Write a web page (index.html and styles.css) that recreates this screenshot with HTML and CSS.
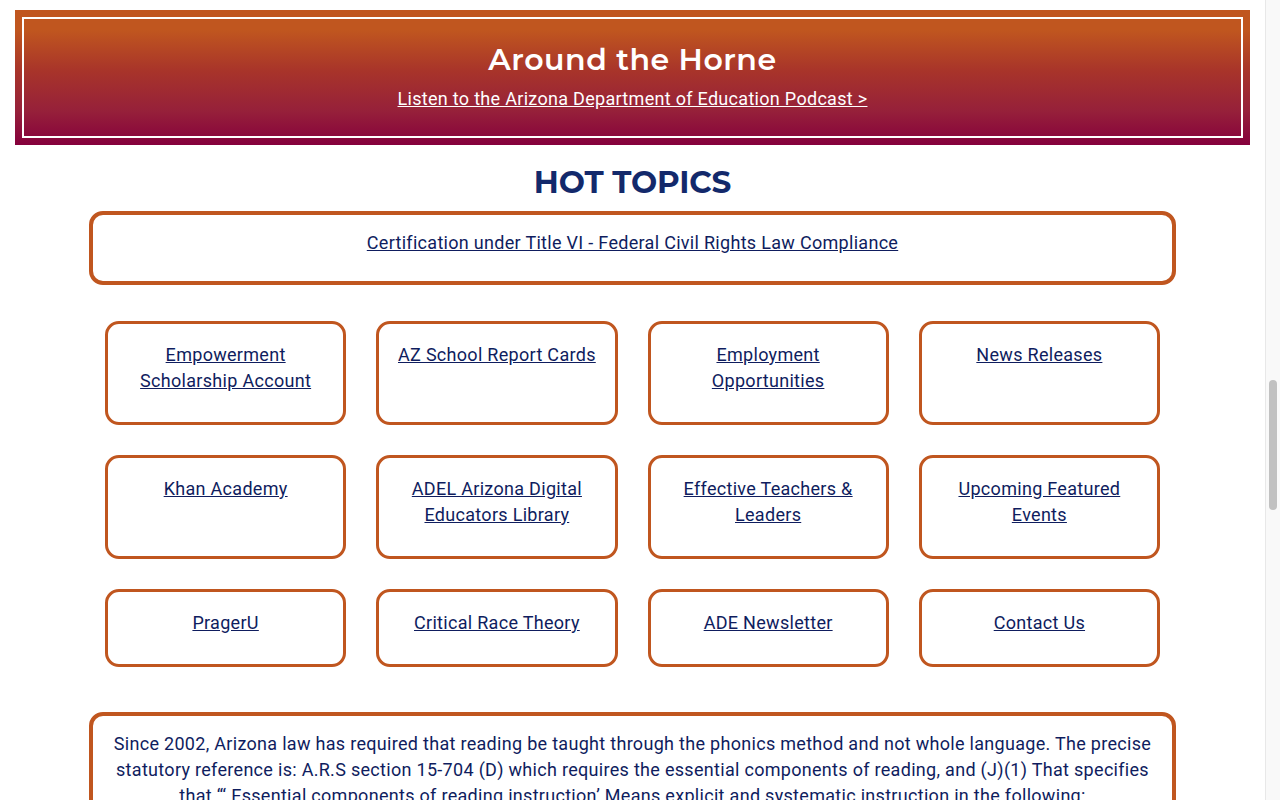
FILE: index.html
```html
<!DOCTYPE html>
<html lang="en">
<head>
    <meta charset="UTF-8">
    <meta name="viewport" content="width=device-width, initial-scale=1.0">
    <title>Arizona Department of Education</title>
    <link rel="stylesheet" href="styles.css">
</head>
<body>
    <div class="page">
        <div class="podcast-banner">
            <div class="podcast-inner">
                <h2>Around the Horne</h2>
                <a href="#">Listen to the Arizona Department of Education Podcast &gt;</a>
            </div>
        </div>

        <div class="container">
            <h2 class="section-title">HOT TOPICS</h2>

            <div class="feature-box">
                <a href="#">Certification under Title VI - Federal Civil Rights Law Compliance</a>
            </div>

            <div class="topic-grid">
                <div class="topic-card"><a href="#">Empowerment Scholarship Account</a></div>
                <div class="topic-card"><a href="#">AZ School Report Cards</a></div>
                <div class="topic-card"><a href="#">Employment Opportunities</a></div>
                <div class="topic-card"><a href="#">News Releases</a></div>
                <div class="topic-card"><a href="#">Khan Academy</a></div>
                <div class="topic-card"><a href="#">ADEL Arizona Digital Educators Library</a></div>
                <div class="topic-card"><a href="#">Effective Teachers &amp; Leaders</a></div>
                <div class="topic-card"><a href="#">Upcoming Featured Events</a></div>
                <div class="topic-card short"><a href="#">PragerU</a></div>
                <div class="topic-card short"><a href="#">Critical Race Theory</a></div>
                <div class="topic-card short"><a href="#">ADE Newsletter</a></div>
                <div class="topic-card short"><a href="#">Contact Us</a></div>
            </div>

            <div class="info-box">
                <p>Since 2002, Arizona law has required that reading be taught through the phonics method and not whole language. The precise statutory reference is: A.R.S section 15-704 (D) which requires the essential components of reading, and (J)(1) That specifies that “‘ Essential components of reading instruction’ Means explicit and systematic instruction in the following:</p>
                <p>(a) Phonemic awareness. (b) Phonics. (c) Vocabulary development. (d) Reading fluency. (e) Reading comprehension.</p>
            </div>
        </div>
    </div>

    <div class="scrollbar"><div class="scroll-thumb"></div></div>
</body>
</html>
```

FILE: styles.css
```css
* {
    margin: 0;
    padding: 0;
    box-sizing: border-box;
}

html {
    overflow: hidden;
}

body {
    background: #fff;
    font-family: Roboto, 'Liberation Sans', sans-serif;
    color: #0f1d5e;
    letter-spacing: 0.3px;
}

.page {
    width: calc(100% - 15px);
    padding-top: 10px;
}

.podcast-banner {
    margin: 0 15px;
    padding: 7px;
    background: linear-gradient(to bottom, #c0561f 0%, #c0561f 15%, #a8342a 45%, #96203a 75%, #85003c 100%);
}

.podcast-inner {
    border: 2px solid #fff;
    height: 121px;
    text-align: center;
    color: #fff;
    padding-top: 22px;
}

.podcast-inner h2 {
    font-family: Montserrat, 'Open Sans', sans-serif;
    font-weight: 600;
    font-size: 30px;
    line-height: 38px;
    letter-spacing: 0.55px;
}

.podcast-inner a {
    display: inline-block;
    margin-top: 8px;
    color: #fff;
    font-size: 18px;
    line-height: 24px;
}

.container {
    max-width: 1087px;
    margin: 0 auto;
}

.section-title {
    text-align: center;
    font-family: Montserrat, 'Open Sans', sans-serif;
    font-weight: 700;
    font-size: 31px;
    line-height: 40px;
    letter-spacing: -0.1px;
    color: #13296b;
    margin: 17px 0 9px;
}

.feature-box {
    border: 4px solid #c0561f;
    border-radius: 14px;
    height: 74px;
    text-align: center;
    padding-top: 16px;
    font-size: 18px;
    line-height: 24px;
}

a {
    color: #0f1d5e;
}

.topic-grid {
    display: grid;
    grid-template-columns: repeat(4, 1fr);
    gap: 30px;
    padding: 0 16px;
    margin-top: 36px;
}

.topic-card {
    border: 3px solid #c0561f;
    border-radius: 14px;
    height: 104px;
    padding: 18px 12px 0;
    text-align: center;
    font-size: 18px;
    line-height: 26px;
}

.topic-card.short {
    height: 78px;
}

.info-box {
    margin-top: 45px;
    border: 4px solid #c0561f;
    border-radius: 14px;
    padding: 15px 20px;
    text-align: center;
    font-size: 18px;
    line-height: 26px;
}

.info-box p + p {
    margin-top: 12px;
}

.scrollbar {
    position: fixed;
    top: 0;
    right: 0;
    width: 15px;
    height: 100%;
    background: #f9f9f9;
    border-left: 1px solid #e8e8e8;
}

.scroll-thumb {
    position: absolute;
    top: 380px;
    left: 3px;
    width: 8px;
    height: 130px;
    border-radius: 4px;
    background: #c1c1c1;
}
```
